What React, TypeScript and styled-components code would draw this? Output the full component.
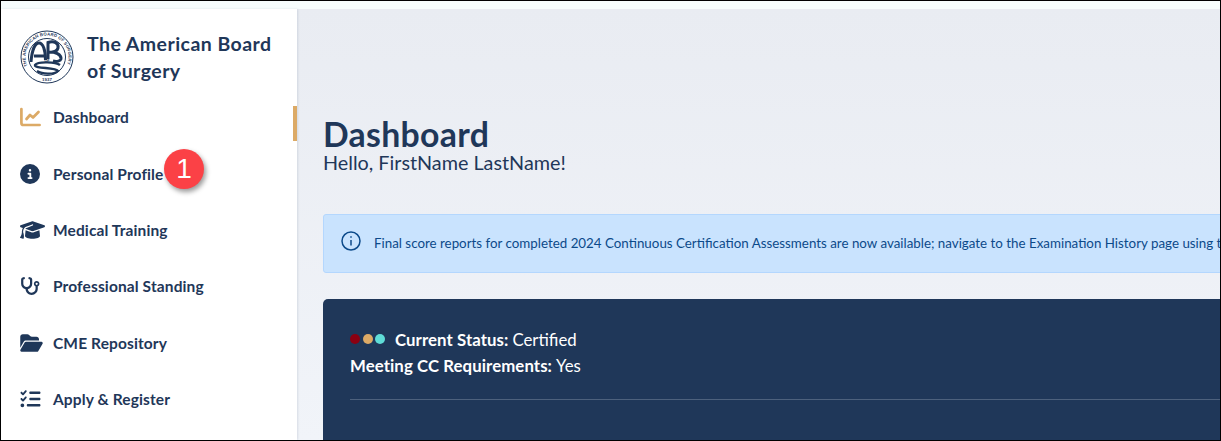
import React from "react";
import styled, { createGlobalStyle } from "styled-components";
import { FaCircleInfo, FaGraduationCap, FaStethoscope, FaFolderOpen, FaListCheck } from "react-icons/fa6";

const Global = createGlobalStyle`
  html, body { margin: 0; padding: 0; background: #fff; }
  * { box-sizing: border-box; }
`;

const Frame = styled.div`
  width: 1221px;
  height: 441px;
  border: 1px solid #000;
  overflow: hidden;
  background: #f6fdfd;
  padding-top: 8px;
  font-family: "Lato", "Liberation Sans", sans-serif;
  color: #1f3759;
`;
const Shell = styled.div`
  display: flex;
  height: 100%;
`;
const Sidebar = styled.aside`
  position: relative;
  flex: 0 0 296px;
  background: #fff;
  padding: 21px 0 0 19px;
  box-shadow: 1px 0 2px rgba(31, 55, 89, 0.12);
  z-index: 1;
`;
const Brand = styled.div`
  display: flex;
  align-items: center;
  gap: 13px;
`;
const BrandName = styled.div`
  font-size: 19.5px;
  line-height: 27px;
  font-weight: 700;
  letter-spacing: 0.45px;
  width: 195px;
`;
const Nav = styled.nav`
  display: flex;
  flex-direction: column;
  margin-top: 5px;
`;
const NavItem = styled.div<{ $active?: boolean }>`
  display: flex;
  align-items: center;
  height: 56.4px;
  font-size: 15.5px;
  font-weight: 700;
  letter-spacing: 0.12px;
  color: #1f3759;
  svg { color: ${(p) => (p.$active ? "#dcaa66" : "#1f3759")}; }
`;
const IconSlot = styled.span<{ $w: number }>`
  display: flex;
  align-items: center;
  flex: 0 0 33px;
  svg {
    flex: none;
    height: 20px;
    width: ${(p) => p.$w}px;
  }
`;
const ActiveMark = styled.span`
  position: absolute;
  right: 0;
  top: 97px;
  width: 4px;
  height: 35px;
  background: #dcaa66;
`;
const Badge = styled.div`
  position: absolute;
  left: 163px;
  top: 140px;
  width: 40px;
  height: 40px;
  border-radius: 50%;
  background: #fb4146;
  color: #fff;
  font-family: "Liberation Sans", sans-serif;
  font-size: 28px;
  line-height: 40px;
  text-align: center;
  box-shadow: 2px 3px 5px rgba(0, 0, 0, 0.4);
  z-index: 2;
`;
const Main = styled.main`
  flex: 1;
  min-width: 0;
  overflow: hidden;
  padding: 108px 0 0 26px;
  background: linear-gradient(180deg, #e9ecf2 0%, #f1f4f9 100%);
`;
const Title = styled.h1`
  margin: 0;
  font-size: 33.8px;
  line-height: 34px;
  font-weight: 700;
  letter-spacing: 0.3px;
`;
const Greeting = styled.p`
  margin: 0;
  font-size: 19.8px;
  line-height: 22px;
`;
const Alert = styled.div`
  display: flex;
  gap: 13px;
  align-items: flex-start;
  width: 1100px;
  height: 59px;
  margin-top: 41px;
  padding: 16px 0 0 17px;
  background: #c9e3fe;
  border: 1px solid #b4d7fe;
  border-radius: 3px;
  color: #0c4a8a;
  font-size: 13.35px;
  white-space: nowrap;
  overflow: hidden;
  svg { flex: none; }
`;
const AlertText = styled.span`
  margin-top: 4px;
  line-height: 16px;
`;
const Card = styled.section`
  width: 1100px;
  height: 200px;
  margin-top: 26px;
  padding: 27px 27px 0;
  background: #1f3759;
  border-radius: 5px 0 0 0;
  color: #fff;
  font-size: 16.8px;
`;
const Line = styled.div`
  display: flex;
  align-items: center;
  height: 26px;
  b { font-weight: 700; letter-spacing: 0.08px; margin-right: 4px; }
`;
const Dots = styled.span`
  display: flex;
  gap: 2.5px;
  margin-right: 10px;
`;
const Dot = styled.i<{ $c: string }>`
  width: 10px;
  height: 10px;
  border-radius: 50%;
  background: ${(p) => p.$c};
`;
const Rule = styled.hr`
  margin: 21px 0 0;
  border: 0;
  height: 1px;
  background: #4d617d;
`;

const Seal = () => (
  <svg width="54" height="54" viewBox="0 0 54 54" style={{ flex: "none" }}>
    <defs>
      <path id="sealRing" d="M 7.5 36 A 21.5 21.5 0 1 1 46.5 36" />
    </defs>
    <circle cx="27" cy="27" r="26" fill="#fff" stroke="#1f3759" strokeWidth="1" />
    <circle cx="27" cy="27" r="18.5" fill="none" stroke="#1f3759" strokeWidth="1" />
    <text fontSize="4.3" fontWeight="700" fill="#1f3759" fontFamily="Liberation Sans, sans-serif">
      <textPath href="#sealRing" textLength="84">THE AMERICAN BOARD OF SURGERY</textPath>
    </text>
    <text x="27" y="51" fontSize="4.4" fontWeight="700" fill="#1f3759" textAnchor="middle" fontFamily="Liberation Sans, sans-serif">1937</text>
    <g fill="none" stroke="#1f3759" strokeWidth="3">
      <path d="M11 32 C12 20 15 13 19 13 C23 13 25.5 20 25.5 30" />
      <path d="M14 26 H25" />
      <path d="M28 29 V12.5 C34 10.5 39 13 38 18 C37 21.5 33 22.5 29 22 C35 22 41.5 24 41 29 C40.5 31 37 32 33 31" />
      <path d="M40 35 C36 32 18 31 15 35 C14 39 36 37 38 41 C34 45 22 44 17 41" strokeWidth="2.4" />
    </g>
    <text x="27" y="32" fontSize="3.6" fontWeight="700" fill="#1f3759" textAnchor="middle" fontFamily="Liberation Sans, sans-serif">OF</text>
  </svg>
);

const TrendIcon = () => (
  <svg viewBox="0 0 21 19" fill="none" stroke="currentColor" strokeWidth="2.7" strokeLinecap="round" strokeLinejoin="round">
    <path d="M1.4 1.5V15.4Q1.4 17.5 3.4 17.5H19.6" />
    <path d="M6.5 11.5L10 7.5L13 10L18.5 4.5" />
  </svg>
);

const items = [
  { label: "Dashboard", icon: <TrendIcon />, width: 21, active: true },
  { label: "Personal Profile", icon: <FaCircleInfo />, width: 20 },
  { label: "Medical Training", icon: <FaGraduationCap />, width: 25 },
  { label: "Professional Standing", icon: <FaStethoscope />, width: 20 },
  { label: "CME Repository", icon: <FaFolderOpen />, width: 23 },
  { label: "Apply & Register", icon: <FaListCheck />, width: 21 },
];

export default function App() {
  return (
    <>
      <Global />
      <Frame>
        <Shell>
          <Sidebar>
            <Brand>
              <Seal />
              <BrandName>The American Board of Surgery</BrandName>
            </Brand>
            <Nav>
              {items.map((it) => (
                <NavItem key={it.label} $active={it.active}>
                  <IconSlot $w={it.width}>{it.icon}</IconSlot>
                  {it.label}
                </NavItem>
              ))}
            </Nav>
            <ActiveMark />
            <Badge>1</Badge>
          </Sidebar>
          <Main>
            <Title>Dashboard</Title>
            <Greeting>Hello, FirstName LastName!</Greeting>
            <Alert>
              <svg width="20" height="20" viewBox="0 0 20 20" fill="none" stroke="#0c4a8a" strokeWidth="1.5">
                <circle cx="10" cy="10" r="9" />
                <path d="M10 9v5.5M10 5.2v1.6" />
              </svg>
              <AlertText>
                Final score reports for completed 2024 Continuous Certification Assessments are now available; navigate to the Examination History page using the link
              </AlertText>
            </Alert>
            <Card>
              <Line>
                <Dots>
                  <Dot $c="#8b0012" />
                  <Dot $c="#dcaa66" />
                  <Dot $c="#5fdcd7" />
                </Dots>
                <b>Current Status:</b> Certified
              </Line>
              <Line>
                <b>Meeting CC Requirements:</b> Yes
              </Line>
              <Rule />
            </Card>
          </Main>
        </Shell>
      </Frame>
    </>
  );
}
